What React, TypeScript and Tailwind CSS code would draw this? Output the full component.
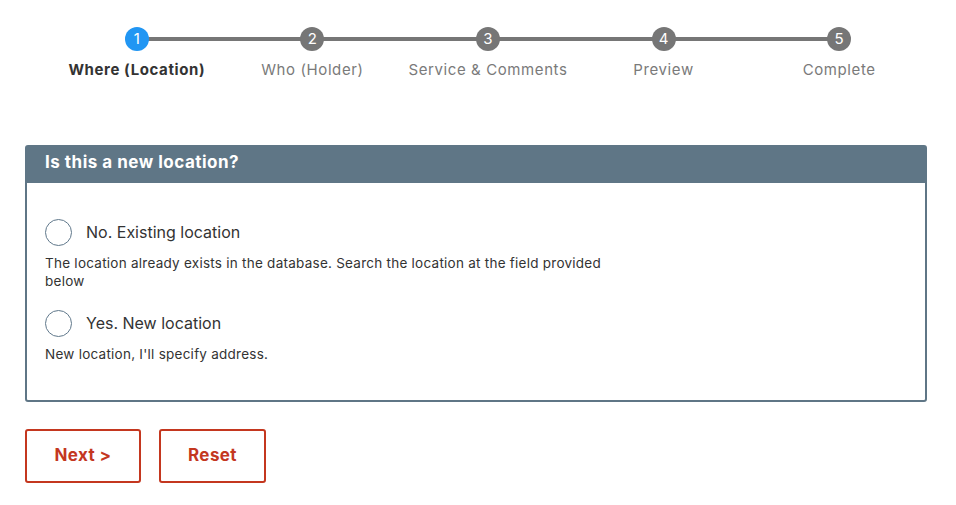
import { useState } from "react";

const steps = ["Where (Location)", "Who (Holder)", "Service & Comments", "Preview", "Complete"];

function Stepper() {
  return (
    <div className="flex pl-[49px] pr-[29px] pt-[27px]">
      {steps.map((label, i) => (
        <div key={label} className="relative flex flex-1 flex-col items-center">
          {i < steps.length - 1 && (
            <div className="absolute left-1/2 top-[10px] h-[4px] w-full bg-[#767676]" />
          )}
          <div
            className={
              "relative z-10 flex h-[24px] w-[24px] items-center justify-center rounded-full text-[15px] text-white " +
              (i === 0 ? "bg-[#2196f3]" : "bg-[#767676]")
            }
          >
            {i + 1}
          </div>
          <div
            className={
              "mt-[9px] text-[15px] leading-[20px] tracking-[0.6px] " +
              (i === 0 ? "font-bold text-[#333]" : "text-[#7a7a7a]")
            }
          >
            {label}
          </div>
        </div>
      ))}
    </div>
  );
}

function Radio({
  checked,
  onClick,
  label,
  desc,
}: {
  checked: boolean;
  onClick: () => void;
  label: string;
  desc: string;
}) {
  return (
    <div>
      <button type="button" onClick={onClick} className="flex items-center">
        <span className="flex h-[27px] w-[27px] items-center justify-center rounded-full border border-[#60788b]">
          {checked && <span className="h-[13px] w-[13px] rounded-full bg-[#60788b]" />}
        </span>
        <span className="ml-[14px] pb-[2px] text-[16px] text-[#333]">{label}</span>
      </button>
      <p className="mt-[8px] max-w-[580px] text-[13.5px] leading-[18px] tracking-[0.25px] text-[#333]">{desc}</p>
    </div>
  );
}

export default function App() {
  const [choice, setchoice] = useState<string>("");

  return (
    <div className="h-[505px] w-[956px] bg-white font-['Inter','Noto_Sans',sans-serif]">
      <Stepper />
      <div className="pl-[25px] pr-[29px] pt-[65px]">
        <div className="rounded-[3px] border-2 border-[#5f7686]">
          <div className="bg-[#5f7686] px-[18px] pb-[9px] pt-[4px] text-[17px] font-bold leading-[23px] tracking-[0.5px] text-white">
            Is this a new location?
          </div>
          <div className="flex flex-col gap-[20px] px-[18px] pb-[37px] pt-[36px]">
            <Radio
              checked={choice === "no"}
              onClick={() => setchoice("no")}
              label="No. Existing location"
              desc="The location already exists in the database. Search the location at the field provided below"
            />
            <Radio
              checked={choice === "yes"}
              onClick={() => setchoice("yes")}
              label="Yes. New location"
              desc="New location, I'll specify address."
            />
          </div>
        </div>
        <div className="mt-[27px] flex gap-[18px]">
          <button className="h-[54px] w-[116px] rounded-[3px] border-2 border-[#c4371f] text-[17px] font-bold tracking-[0.4px] text-[#c4371f]">
            Next &gt;
          </button>
          <button className="h-[54px] w-[107px] rounded-[3px] border-2 border-[#c4371f] text-[17px] font-bold tracking-[0.4px] text-[#c4371f]">
            Reset
          </button>
        </div>
      </div>
    </div>
  );
}
